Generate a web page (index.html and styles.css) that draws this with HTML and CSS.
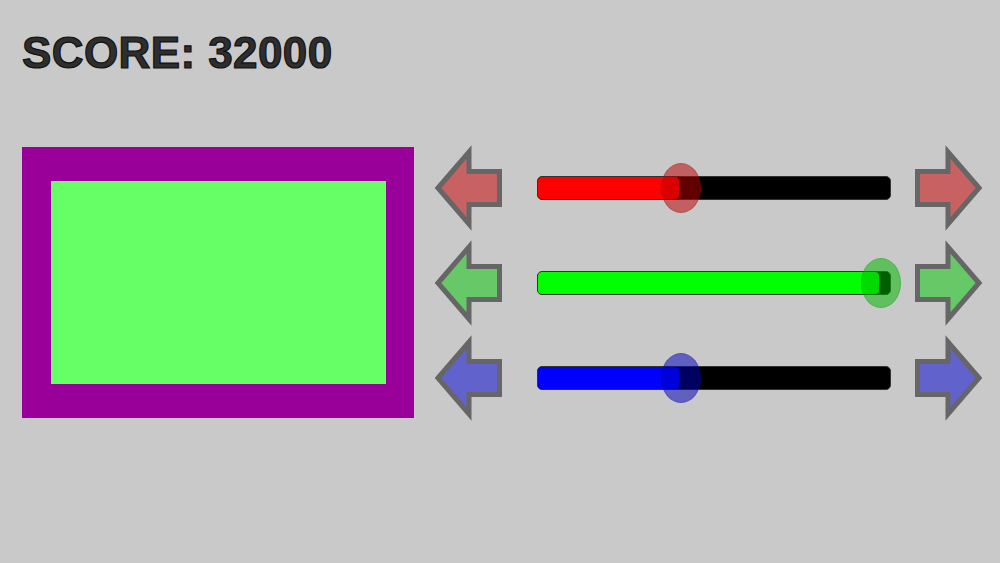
FILE: index.html
```
<!DOCTYPE html>
<html lang="en">
<head>
    <meta charset="UTF-8">
    <meta name="viewport" content="width=device-width, initial-scale=1.0">
    <title>Colour Mixer</title>
    <link rel="stylesheet" href="styles.css">
</head>
<body>
    <div id="game">
        <h1 class="score">SCORE: 32000</h1>

        <div class="board">
            <!-- target colour preview -->
            <div class="preview">
                <div class="swatch"></div>
            </div>

            <div class="controls">
                <div class="row red">
                    <svg class="arrow" viewBox="0 0 67 80"><polygon points="3,40 34,4 34,23.5 64.5,23.5 64.5,56.5 34,56.5 34,76"/></svg>
                    <div class="track"><div class="fill" style="width: 40%"></div><div class="knob" style="left: 40.5%"></div></div>
                    <svg class="arrow flip" viewBox="0 0 67 80"><polygon points="3,40 34,4 34,23.5 64.5,23.5 64.5,56.5 34,56.5 34,76"/></svg>
                </div>
                <div class="row green">
                    <svg class="arrow" viewBox="0 0 67 80"><polygon points="3,40 34,4 34,23.5 64.5,23.5 64.5,56.5 34,56.5 34,76"/></svg>
                    <div class="track"><div class="fill" style="width: 97%"></div><div class="knob" style="left: 97.5%"></div></div>
                    <svg class="arrow flip" viewBox="0 0 67 80"><polygon points="3,40 34,4 34,23.5 64.5,23.5 64.5,56.5 34,56.5 34,76"/></svg>
                </div>
                <div class="row blue">
                    <svg class="arrow" viewBox="0 0 67 80"><polygon points="3,40 34,4 34,23.5 64.5,23.5 64.5,56.5 34,56.5 34,76"/></svg>
                    <div class="track"><div class="fill" style="width: 40%"></div><div class="knob" style="left: 40.5%"></div></div>
                    <svg class="arrow flip" viewBox="0 0 67 80"><polygon points="3,40 34,4 34,23.5 64.5,23.5 64.5,56.5 34,56.5 34,76"/></svg>
                </div>
            </div>
        </div>
    </div>
</body>
</html>
```

FILE: styles.css
```
html,
body{
    margin: 0;
    height: 100%;
    background-color: #c9c9c9;
}
#game{
    padding: 25px 0 0 22px;
    font-family: "Liberation Sans", Arial, sans-serif;
}
.score{
    margin: 0 0 0 0;
    font-size: 44px;
    line-height: 56px;
    font-weight: bold;
    letter-spacing: 0.4px;
    color: #2e2e2e;
    -webkit-text-stroke: 1.2px #111;
}
.board{
    display: flex;
    align-items: flex-start;
    margin-top: 66px;
}
.preview{
    width: 392px;
    height: 271px;
    box-sizing: border-box;
    padding: 34px 28px 34px 29px;
    background-color: #990099;
}
.swatch{
    height: 100%;
    background-color: #66ff66;
}
.controls{
    display: flex;
    flex-direction: column;
    gap: 15px;
    margin-left: 21px;
    margin-top: 1px;
}
.row{
    display: flex;
    align-items: center;
    height: 80px;
}
.arrow{
    width: 67px;
    height: 80px;
    overflow: visible;
}
.arrow polygon{
    stroke: #666;
    stroke-width: 5;
    stroke-linejoin: miter;
}
.arrow.flip{
    transform: scaleX(-1);
    margin-left: 24px;
}
.track{
    position: relative;
    width: 354px;
    height: 24px;
    margin-left: 35px;
    box-sizing: border-box;
    border: 1px solid #333;
    border-radius: 5px;
    background-color: #000;
}
.fill{
    height: 100%;
    border-radius: 4px;
}
.knob{
    position: absolute;
    top: 50%;
    width: 38px;
    height: 48px;
    border-radius: 50%;
    transform: translate(-50%, -50%);
}
.red polygon{ fill: #c86262; }
.red .fill{ background-color: #ff0000; }
.red .knob{ background-color: rgba(185, 0, 0, 0.52); border: 1px solid rgba(150, 0, 0, 0.2); }
.green polygon{ fill: #66c866; }
.green .fill{ background-color: #00ff00; }
.green .knob{ background-color: rgba(0, 185, 0, 0.52); border: 1px solid rgba(0, 120, 0, 0.2); }
.blue polygon{ fill: #6262cc; }
.blue .fill{ background-color: #0000ff; }
.blue .knob{ background-color: rgba(0, 0, 185, 0.52); border: 1px solid rgba(0, 0, 150, 0.2); }
```
